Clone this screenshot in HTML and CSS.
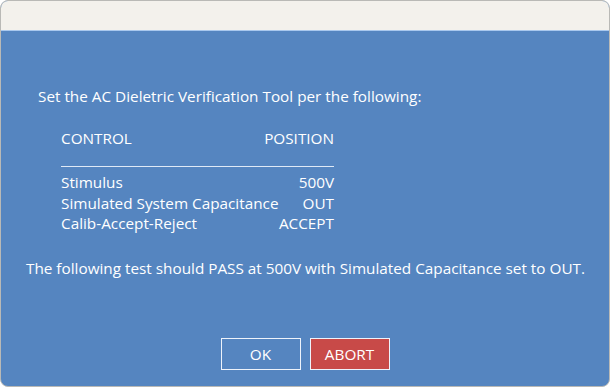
FILE: index.html
```html
<!DOCTYPE html>
<html lang="en">
<head>
  <meta charset="UTF-8" />
  <title>AC Dielectric Verification</title>
  <link rel="stylesheet" href="styles.css">
</head>
<body>
  <div class="window">
    <div class="titlebar"></div>
    <div class="content">
      <p class="intro">Set the AC Dieletric Verification Tool per the following:</p>
      <div class="settings">
        <div class="head">CONTROL</div>
        <div class="head right">POSITION</div>
        <div class="rule"></div>
        <div>Stimulus</div>
        <div class="right">500V</div>
        <div>Simulated System Capacitance</div>
        <div class="right">OUT</div>
        <div>Calib-Accept-Reject</div>
        <div class="right">ACCEPT</div>
      </div>
      <p class="note">The following test should PASS at 500V with Simulated Capacitance set to OUT.</p>
      <div class="buttons">
        <button class="btn ok">OK</button>
        <button class="btn abort">ABORT</button>
      </div>
    </div>
  </div>
</body>
</html>
```

FILE: styles.css
```css
* {
  margin: 0;
  padding: 0;
  box-sizing: border-box;
}
html, body {
  height: 100%;
  overflow: hidden;
}
body {
  background: #ffffff;
  font-family: 'Open Sans', 'Noto Sans', sans-serif;
  font-size: 15.3px;
  color: #fff;
}
.window {
  height: 387px;
  display: flex;
  flex-direction: column;
  border: 1px solid #b9b9b6;
  border-radius: 8px;
  overflow: hidden;
  background: #5585c0;
}
.titlebar {
  flex: none;
  height: 30px;
  background: #f3f1ec;
  border-bottom: 1px solid #a9c8ee;
}
.content {
  flex: 1;
  display: flex;
  flex-direction: column;
  padding: 55px 0 0 37px;
  white-space: nowrap;
}
.intro {
  line-height: 20px;
}
.settings {
  display: grid;
  grid-template-columns: minmax(0, 1fr) auto;
  width: 273px;
  margin: 22px 0 0 23px;
  line-height: 20.5px;
}
.head {
  line-height: 20px;
}
.right {
  text-align: right;
}
.rule {
  grid-column: 1 / 3;
  height: 1px;
  background: #dfe9f6;
  margin: 18px 0 5px;
}
.note {
  margin: 24px 0 0 -12px;
  line-height: 20px;
}
.buttons {
  display: flex;
  justify-content: center;
  gap: 9px;
  margin: 60px 0 0 -37px;
}
.btn {
  width: 80px;
  height: 32px;
  border: 1.5px solid #eef3fb;
  font-family: inherit;
  font-size: 15.3px;
  color: #fff;
  background: transparent;
}
.btn.abort {
  background: #c84a48;
}
```
